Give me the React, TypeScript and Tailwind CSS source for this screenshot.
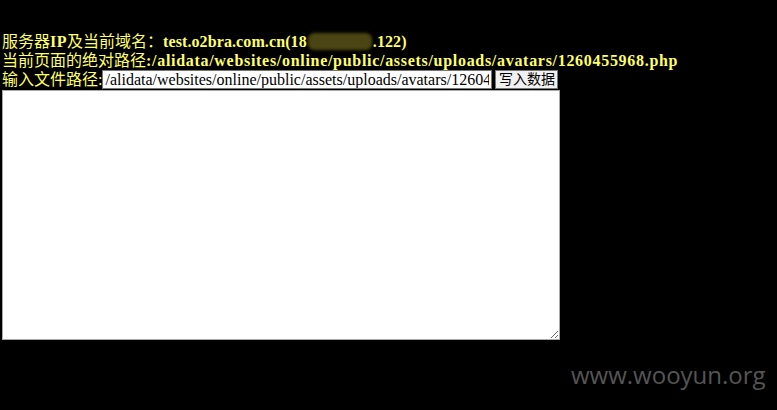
const serif = "font-['Liberation_Serif','Noto_Sans_CJK_SC',serif]";

export default function App() {
  return (
    <div className="relative h-[410px] w-[777px] overflow-hidden bg-black pt-[30px] pl-[2px] text-[16px] leading-[19px] text-[#ffff66]">
      <div className={serif}>
        服务器<b className="tracking-[0.5px]">IP</b>及当前域名：
        <b className="tracking-[0.1px]">
          test.o2bra.com.cn(18
          <span className="mx-[1px] inline-block h-[17px] w-[64px] translate-y-[3px] rounded-[6px] bg-[#4a4512] blur-[1.5px]" />
          .122)
        </b>
      </div>
      <div className={serif}>
        当前页面的绝对路径<b className="tracking-[0.7px]">:/alidata/websites/online/public/assets/uploads/avatars/1260455968.php</b>
      </div>
      <form className={`flex items-center ${serif}`}>
        <span>输入文件路径:</span>
        <input
          defaultValue="/alidata/websites/online/public/assets/uploads/avatars/1260455968.php"
          className="h-[19px] w-[390px] border border-[#767676] bg-white px-[2px] text-[16px] leading-[17px] text-black outline-none"
        />
        <button
          type="button"
          className="ml-[3px] h-[19px] w-[63px] border border-[#767676] bg-[#f0f0f0] text-[14px] leading-[17px] text-black"
        >
          写入数据
        </button>
      </form>
      <textarea className="mt-[1px] block h-[250px] w-[558px] border border-[#a9a9a9] bg-white" />
      <div className="absolute left-[571px] top-[365px] font-['Open_Sans',sans-serif] text-[24px] text-[#555]">
        www.wooyun.org
      </div>
    </div>
  );
}
